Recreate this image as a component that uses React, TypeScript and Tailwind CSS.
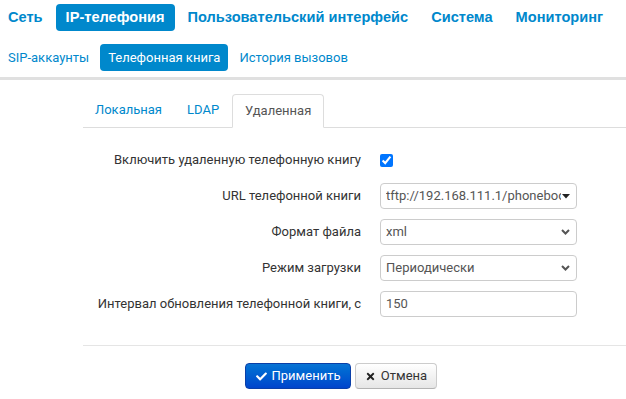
import { FaCheck, FaTimes } from "react-icons/fa";

const topItems = ["Сеть", "IP-телефония", "Пользовательский интерфейс", "Система", "Мониторинг"];
const subItems = ["SIP-аккаунты", "Телефонная книга", "История вызовов"];

const Chevron = () => (
  <svg width="9" height="6" viewBox="0 0 9 6" className="shrink-0">
    <polyline points="1,1 4.5,4.5 8,1" fill="none" stroke="#555" strokeWidth="2" />
  </svg>
);

const SelectBox = ({ value, caret }: { value: string; caret?: boolean }) => (
  <div className="flex h-[26px] w-[197px] items-center rounded-[4px] border border-[#ccc] bg-white pl-[5px] pr-[6px]">
    <span className="flex-1 overflow-hidden whitespace-nowrap text-[13px] text-[#555]">{value}</span>
    {caret ? (
      <svg width="8" height="5" viewBox="0 0 8 5" className="ml-[1px] shrink-0">
        <polygon points="0,0 8,0 4,4.5" fill="#222" />
      </svg>
    ) : (
      <Chevron />
    )}
  </div>
);

const Row = ({ label, children }: { label: string; children: React.ReactNode }) => (
  <div className="flex h-[26px] items-center">
    <div className="w-[280px] pr-[2px] text-right text-[13px] text-[#333]">{label}</div>
    <div className="ml-[17px] flex">{children}</div>
  </div>
);

export default function App() {
  return (
    <div className="h-[399px] w-[626px] overflow-hidden bg-white" style={{ fontFamily: "Roboto, 'Liberation Sans', sans-serif" }}>
      <nav className="ml-[-2px] flex gap-[3px] pt-[4px]" style={{ fontFamily: "'Liberation Sans', Arial, sans-serif" }}>
        {topItems.map((t) => (
          <span
            key={t}
            className={
              "flex h-[27px] items-center rounded-[4px] px-[10px] text-[14.6px] font-bold " +
              (t === "IP-телефония" ? "bg-[#0088cc] text-white" : "text-[#0088cc]")
            }
          >
            {t}
          </span>
        ))}
      </nav>
      <nav className="mt-[13px] flex gap-[3px]">
        {subItems.map((t) => (
          <span
            key={t}
            className={
              "flex h-[27px] items-center rounded-[4px] px-2 text-[13px] " +
              (t === "Телефонная книга" ? "bg-[#0088cc] text-white" : "text-[#0088cc]")
            }
          >
            {t}
          </span>
        ))}
      </nav>
      <div className="mt-[6px] h-[3px] bg-[#e0e0e0]" />

      <div className="ml-[83px] pt-[14px]">
        <div className="flex border-b border-[#ddd]">
          <span className="mb-[-1px] px-3 py-[8px] text-[13px] leading-[16px] text-[#0088cc]">Локальная</span>
          <span className="mb-[-1px] ml-[1px] px-3 py-[8px] text-[13px] leading-[16px] text-[#0088cc]">LDAP</span>
          <span className="mb-[-1px] ml-[1px] rounded-t-[4px] border border-b-white border-[#ddd] bg-white px-3 py-[8px] text-[13px] leading-[16px] text-[#555]">
            Удаленная
          </span>
        </div>

        <div className="flex flex-col gap-[10px] pt-[19px]">
          <Row label="Включить удаленную телефонную книгу">
            <input type="checkbox" defaultChecked className="m-0 h-[13px] w-[13px] accent-[#0075ff]" />
          </Row>
          <Row label="URL телефонной книги">
            <SelectBox value="tftp://192.168.111.1/phonebook.xml" caret />
          </Row>
          <Row label="Формат файла">
            <SelectBox value="xml" />
          </Row>
          <Row label="Режим загрузки">
            <SelectBox value="Периодически" />
          </Row>
          <Row label="Интервал обновления телефонной книги, с">
            <div className="flex h-[26px] w-[197px] items-center rounded-[4px] border border-[#ccc] bg-white px-[5px] text-[13px] text-[#555]">
              150
            </div>
          </Row>
        </div>

        <div className="mt-[28px] border-t border-[#e5e5e5]" />

        <div className="ml-[162px] mt-[17px] flex gap-[4px]">
          <button className="flex h-[26px] w-[106px] items-center justify-center gap-[5px] rounded-[4px] border border-[#0a3fa8] bg-gradient-to-b from-[#0a74d4] to-[#0044cc] text-[13px] text-white">
            <FaCheck size={11} />
            Применить
          </button>
          <button className="flex h-[26px] w-[82px] items-center justify-center gap-[5px] rounded-[4px] border border-[#ccc] border-b-[#b3b3b3] bg-gradient-to-b from-white to-[#e6e6e6] text-[13px] text-[#333]">
            <FaTimes size={11} className="text-[#222]" />
            Отмена
          </button>
        </div>
      </div>
    </div>
  );
}
